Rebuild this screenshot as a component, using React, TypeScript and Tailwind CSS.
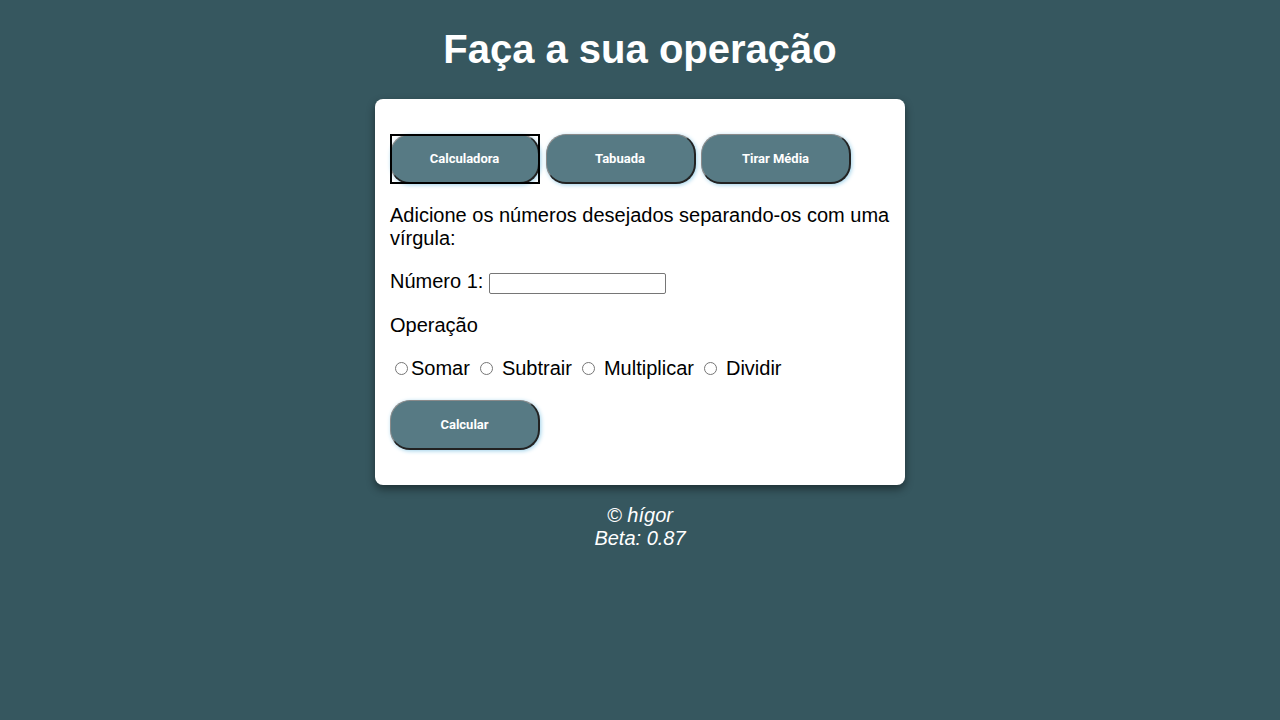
const tabs = ["Calculadora", "Tabuada", "Tirar Média"];
const ops = ["Somar", "Subtrair", "Multiplicar", "Dividir"];

const btn =
  "w-[150px] h-[50px] rounded-[20px] bg-[#577a84] text-white text-[13px] font-bold font-['Roboto',sans-serif] border border-[#8a8a8a] border-r-[#222] border-b-[#222] border-r-2 border-b-2 shadow-[1px_1px_4px_#9fd2ea]";

export default function App() {
  return (
    <div className="min-h-screen bg-[#36575f] font-['Liberation_Sans',Arial,sans-serif] flex flex-col items-center">
      <h1 className="text-white text-[40px] font-bold mt-[24px] leading-[50px]">
        Faça a sua operação
      </h1>

      <div className="mt-[25px] w-[530px] bg-white rounded-lg shadow-[0_4px_8px_rgba(0,0,0,0.45)] px-[15px] pt-[35px] pb-[35px] text-[20px] leading-[23px] text-black">
        <div className="flex gap-[5.5px]">
          {tabs.map((t, i) => (
            <div
              key={t}
              className={i === 0 ? "outline-2 outline-black -outline-offset-2" : ""}
            >
              <button className={btn + " block"}>{t}</button>
            </div>
          ))}
        </div>

        <p className="mt-[20px]">
          Adicione os números desejados separando-os com uma vírgula:
        </p>

        <p className="mt-[20px] flex items-center h-[23px]">
          Número 1:
          <input
            type="text"
            className="ml-[6px] relative top-[2px] w-[177px] h-[21px] border border-[#767676] rounded-[2px]"
          />
        </p>

        <p className="mt-[21px]">Operação</p>

        <div className="mt-[20px] flex items-center">
          {ops.map((o, i) => (
            <label key={o} className="flex items-center">
              <span className="ml-[5px] mr-[3px] w-[13px] h-[13px] rounded-full border border-[#767676] inline-block" />
              <span className={i === 0 ? "" : "ml-[6px]"}>{o}</span>
              {i < ops.length - 1 && <span className="w-[5px]" />}
            </label>
          ))}
        </div>

        <button className={btn + " mt-[20px]"}>Calcular</button>
      </div>

      <footer className="mt-[19px] text-white italic text-[20px] leading-[23px] text-center">
        <div>© hígor</div>
        <div>Beta: 0.87</div>
      </footer>
    </div>
  );
}
